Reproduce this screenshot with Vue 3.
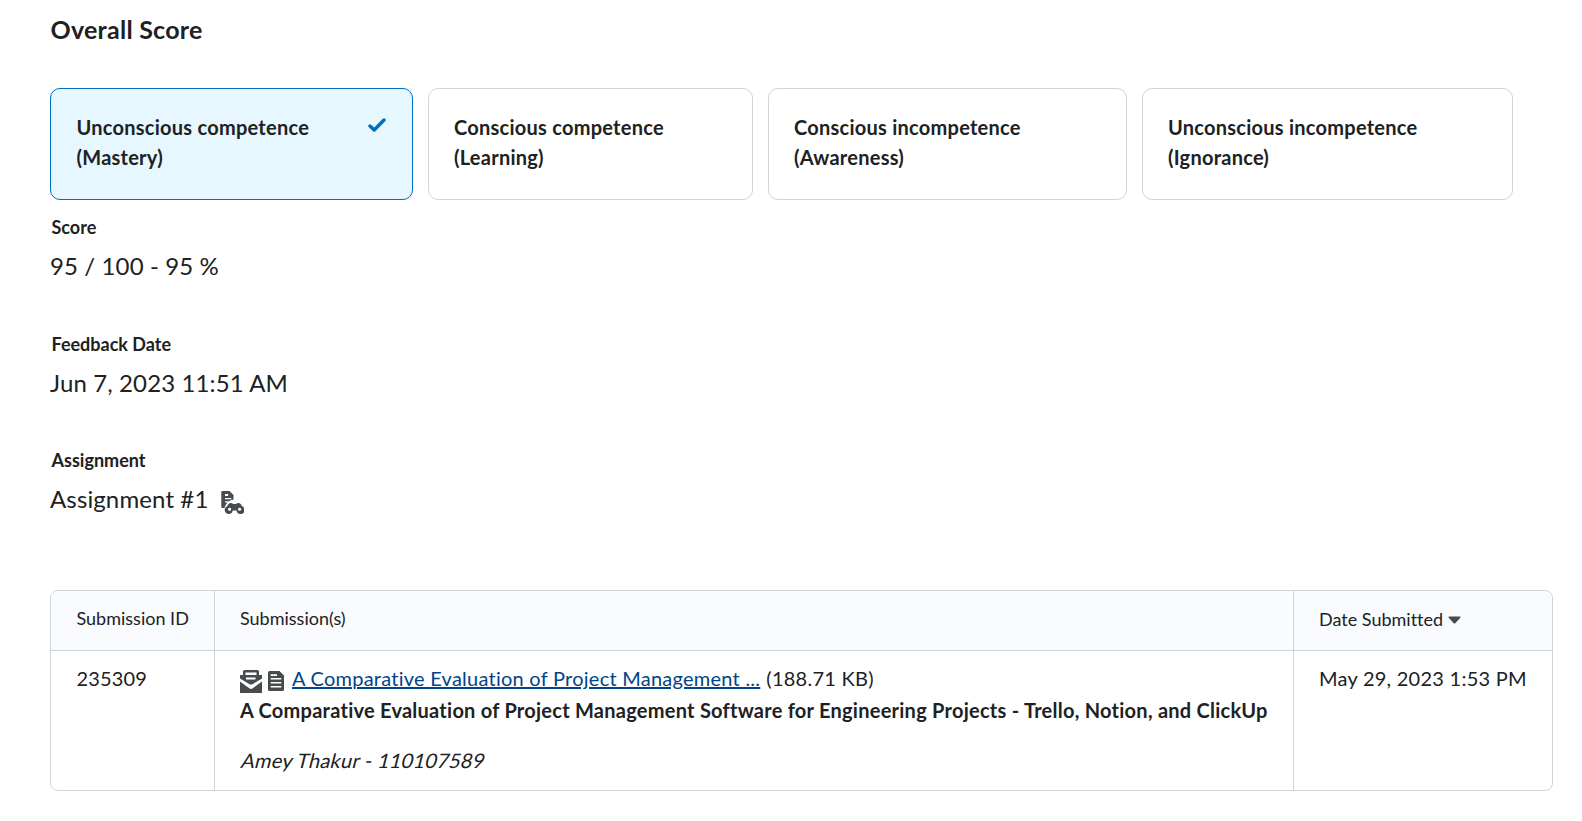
<script setup>
const levels = [
  { name: 'Unconscious competence', note: '(Mastery)', key: 'mastery', selected: true },
  { name: 'Conscious competence', note: '(Learning)', key: 'learning' },
  { name: 'Conscious incompetence', note: '(Awareness)', key: 'awareness' },
  { name: 'Unconscious incompetence', note: '(Ignorance)', key: 'ignorance' },
]
</script>

<template>
  <main class="page">
    <h2 class="heading">Overall Score</h2>

    <div class="levels">
      <div v-for="l in levels" :key="l.key" class="level" :class="{ selected: l.selected }">
        <div class="level-text">{{ l.name }}<br />{{ l.note }}</div>
        <svg v-if="l.selected" class="check" viewBox="0 0 18 14" width="18" height="14">
          <path d="M2 8 L6.2 12 L16 2" fill="none" stroke="#006fbf" stroke-width="3.4" stroke-linecap="round" stroke-linejoin="round" />
        </svg>
      </div>
    </div>

    <section class="field">
      <div class="label">Score</div>
      <div class="value"><span class="score">95 / 100 - 95 %</span></div>
    </section>
    <section class="field">
      <div class="label">Feedback Date</div>
      <div class="value">Jun 7, 2023 11:51 AM</div>
    </section>
    <section class="field last">
      <div class="label">Assignment</div>
      <div class="value">
        <span>Assignment #1</span>
        <svg class="view-icon" viewBox="0 0 23 23" width="23" height="23">
          <path fill="#494c4e" fill-rule="evenodd" d="M1.500 0H8.500L12.500 4V8.800Q10 8.800 8.200 10.200H4V11.500H6.500L4.500 14.200Q4 15.500 3.500 17H1.500Q.3 17 .3 15.800V1.200Q.3 0 1.500 0ZM4 3V5H7.200V3ZM4 7V8.300H10.300V7Z" />
          <path fill="#494c4e" fill-rule="evenodd" d="M8.500 12.300Q11 11.300 12 13H15.200Q16.200 11.300 18.700 12.300Q20 12.900 21 15.300A4 4 0 1 1 15.600 19.500H11.700A4 4 0 1 1 6.200 15.300Q7.200 12.900 8.500 12.300ZM8.600 16.700A1.600 1.600 0 1 0 8.610 16.700ZM18.600 16.700A1.600 1.600 0 1 0 18.610 16.700Z" />
        </svg>
      </div>
    </section>

    <div class="table">
      <div class="cell th">Submission ID</div>
      <div class="cell th">Submission(s)</div>
      <div class="cell th sort">
        <span>Date Submitted</span>
        <svg viewBox="0 0 13 8" width="13" height="8"><path d="M1 .5H12Q13 .8 12.300 1.800L7.500 7Q6.500 8 5.500 7L.7 1.800Q0 .8 1 .5Z" fill="#494c4e" /></svg>
      </div>
      <div class="cell"><span class="number">235309</span></div>
      <div class="cell">
        <div class="file">
          <svg class="inbox" viewBox="0 0 22 23" width="22" height="23">
            <path fill="#494c4e" fill-rule="evenodd" d="M4.500 0H17.500Q19 0 19 1.500V5H22V8.500L12.500 14.200Q11 15 9.500 14.200L0 8.500V5H3V1.500Q3 0 4.500 0ZM5.500 2.500V5H16.500V2.500ZM6 7.500V9.500H15.500V7.500Z" />
            <path fill="#494c4e" d="M0 11.500L9.300 18.300Q11 19.500 12.700 18.300L22 11.500V23H0Z" />
          </svg>
          <svg class="doc" viewBox="0 0 16 20" width="16" height="20">
            <path fill="#494c4e" fill-rule="evenodd" d="M1.500 0H11.500L16 4.500V18.500Q16 20 14.500 20H1.500Q0 20 0 18.500V1.500Q0 0 1.500 0ZM2.700 3.200V4.900H9V3.200ZM2.700 7V8.600H13.300V7ZM2.700 11V12.600H13.300V11ZM2.700 15V16.600H13.300V15Z" />
          </svg>
          <a class="link">A Comparative Evaluation of Project Management ...</a>
          <span class="size">(188.71 KB)</span>
        </div>
        <div class="title">A Comparative Evaluation of Project Management Software for Engineering Projects - Trello, Notion, and ClickUp</div>
        <div class="author">Amey Thakur - 110107589</div>
      </div>
      <div class="cell">May 29, 2023 1:53 PM</div>
    </div>
  </main>
</template>

<style>
body {
  background: #fff;
}
</style>

<style scoped>
.page {
  box-sizing: border-box;
  width: 1582px;
  height: 821px;
  padding: 11px 29px 0 50px;
  overflow: hidden;
  font-family: Lato, sans-serif;
  font-size: 20px;
  line-height: 30px;
  letter-spacing: 0.25px;
  font-variant-ligatures: none;
  color: #202122;
  white-space: nowrap;
}
.heading {
  margin: 0 0 41px 0.5px;
  font-size: 25px;
  line-height: 36px;
  font-weight: 700;
}
.levels {
  display: grid;
  grid-template-columns: 363px 325px 359px 371px;
  gap: 15px;
  height: 112px;
}
.level {
  box-sizing: border-box;
  display: flex;
  justify-content: space-between;
  padding: 23px 26px 0 25px;
  border: 1px solid #cdd5dc;
  border-radius: 10px;
  font-weight: 700;
}
.level.selected {
  border-color: #006fbf;
  background: #e6f7ff;
}
.selected .level-text {
  margin-left: 0.5px;
}
.check {
  margin-top: 6px;
}
.levels + .field {
  margin-top: 15px;
}
.field {
  height: 116.5px;
}
.field.last {
  height: 142px;
}
.label {
  margin: 0 0 8px 1.5px;
  font-size: 18px;
  line-height: 24px;
  font-weight: 700;
  letter-spacing: 0;
}
.value {
  display: flex;
  font-size: 24px;
  line-height: 37px;
  letter-spacing: 0.12px;
}
.view-icon {
  margin: 11px 0 0 13px;
}
.table {
  box-sizing: border-box;
  display: grid;
  grid-template-columns: 164px 1079px 258px;
  grid-template-rows: 60px 139px;
  width: 1503px;
  border: 1px solid #cdd5dc;
  border-radius: 8px;
  overflow: hidden;
}
.cell {
  box-sizing: border-box;
  padding: 12px 0 0 25px;
}
.cell:nth-child(3n + 1) {
  padding-left: 25.5px;
}
.cell:not(:nth-child(3n)) {
  border-right: 1px solid #cdd5dc;
}
.number {
  letter-spacing: 0.15px;
}
.th {
  padding-top: 12px;
  font-size: 18px;
  letter-spacing: 0;
  background: #f9fbff;
  border-bottom: 1px solid #cdd5dc;
}
.sort {
  display: flex;
  padding-top: 13px;
}
.sort svg {
  margin: 12px 0 0 5px;
}
.file {
  display: flex;
  height: 32px;
}
.inbox {
  margin-top: 7px;
}
.doc {
  margin: 8px 8px 0 6px;
}
.link {
  color: #004489;
  text-decoration: underline;
  margin-right: 6px;
}
.title {
  font-weight: 700;
}
/* Slanted roman letterforms rather than the family's true italic */
.author {
  width: max-content;
  margin-top: 20px;
  transform: skewX(-14deg);
  transform-origin: 0 23px;
}
</style>
